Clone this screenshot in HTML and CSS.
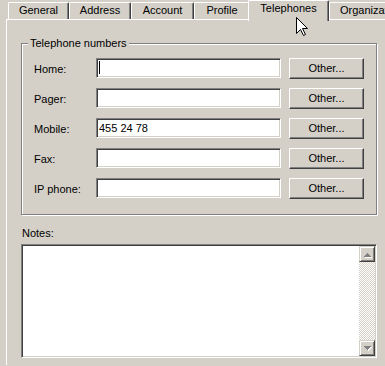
FILE: index.html
```html
<!DOCTYPE html>
<html>
<head>
<meta charset="utf-8">
<link rel="stylesheet" href="styles.css">
</head>
<body>
<div class="window">
  <div class="tabs">
    <div class="tab w-general">General</div>
    <div class="tab w-address">Address</div>
    <div class="tab w-account">Account</div>
    <div class="tab w-profile">Profile</div>
    <div class="tab active">Telephones</div>
    <div class="tab w-org">Organization</div>
  </div>
  <div class="page">
    <div class="group">
      <span class="legend">Telephone numbers</span>
      <div class="row"><span class="lbl">Home:</span><div class="field"><span class="caret"></span></div><div class="btn">Other...</div></div>
      <div class="row"><span class="lbl">Pager:</span><div class="field"></div><div class="btn">Other...</div></div>
      <div class="row"><span class="lbl">Mobile:</span><div class="field">455 24 78</div><div class="btn">Other...</div></div>
      <div class="row"><span class="lbl">Fax:</span><div class="field"></div><div class="btn">Other...</div></div>
      <div class="row"><span class="lbl">IP phone:</span><div class="field"></div><div class="btn">Other...</div></div>
    </div>
    <div class="notes-label">Notes:</div>
    <div class="notes">
      <div class="notes-body"></div>
      <div class="scrollbar">
        <div class="sbtn">
          <svg width="14" height="14" viewBox="0 0 14 14"><path d="M7 6h1v1H7zM6 7h3v1H6zM5 8h5v1H5zM4 9h7v1H4z" fill="#fff" transform="translate(1 1)"/><path d="M7 6h1v1H7zM6 7h3v1H6zM5 8h5v1H5zM4 9h7v1H4z" fill="#808080"/></svg>
        </div>
        <div class="track"></div>
        <div class="sbtn">
          <svg width="14" height="14" viewBox="0 0 14 14"><path d="M4 5h7v1H4zM5 6h5v1H5zM6 7h3v1H6zM7 8h1v1H7z" fill="#fff" transform="translate(1 1)"/><path d="M4 5h7v1H4zM5 6h5v1H5zM6 7h3v1H6zM7 8h1v1H7z" fill="#808080"/></svg>
        </div>
      </div>
    </div>
  </div>
  <svg class="cursor" width="13" height="20" viewBox="0 0 13 20"><path d="M0.5 0.5V16.5L4.5 12.5L7.5 18.5L9.5 17.5L6.5 11.5H11.5Z" fill="#fff" stroke="#000" stroke-width="1" stroke-linejoin="miter"/></svg>
</div>
</body>
</html>
```

FILE: styles.css
```css
html, body {
  margin: 0;
  padding: 0;
  background: #d4d0c8;
  overflow: hidden;
}
body {
  width: 385px;
  height: 366px;
  font-family: "Liberation Sans", Arial, sans-serif;
  font-size: 11px;
  color: #000;
}
.window {
  position: relative;
  width: 385px;
  height: 366px;
}
.tabs {
  display: flex;
  align-items: flex-end;
  height: 19px;
  padding-left: 8px;
  white-space: nowrap;
}
.tab {
  box-sizing: border-box;
  height: 17px;
  flex: none;
  border-top: 1px solid #fff;
  border-left: 1px solid #fff;
  border-right: 1px solid #404040;
  border-radius: 2px 2px 0 0;
  box-shadow: inset -1px 0 #808080;
  background: #d4d0c8;
  line-height: 13px;
  padding-top: 1px;
  text-align: center;
}
.w-general { width: 61px; }
.w-address { width: 62px; }
.w-account { width: 63px; }
.w-profile { width: 56px; }
.w-org { width: 80px; text-align: left; padding-left: 10px; }
.tab.active {
  position: relative;
  z-index: 2;
  width: 81px;
  height: 21px;
  margin-left: -2px;
  margin-bottom: -2px;
}
.page {
  margin-left: 6px;
  border-left: 1px solid #fff;
  border-top: 1px solid #fff;
  padding-left: 14px;
  height: 346px;
  box-sizing: border-box;
}
.group {
  position: relative;
  box-sizing: border-box;
  width: 356px;
  margin-top: 23px;
  border: 1px solid #808080;
  box-shadow: inset 1px 1px #fff, 1px 1px #fff;
  padding: 14px 12px 15px 12px;
  display: flex;
  flex-direction: column;
  gap: 9px;
}
.legend {
  position: absolute;
  top: -8px;
  left: 6px;
  padding: 0 2px;
  background: #d4d0c8;
  line-height: 14px;
}
.row {
  display: flex;
  align-items: flex-start;
  height: 21px;
}
.lbl {
  width: 62px;
  flex: none;
  line-height: 13px;
  padding-top: 5px;
}
.field {
  box-sizing: border-box;
  width: 185px;
  height: 20px;
  flex: none;
  background: #fff;
  border: 1px solid;
  border-color: #808080 #fff #fff #808080;
  box-shadow: inset 1px 1px #404040, inset -1px -1px #d4d0c8;
  padding: 3px 2px 0 2px;
  line-height: 13px;
}
.caret {
  display: block;
  width: 1px;
  height: 13px;
  margin-top: -1px;
  background: #000;
}
.btn {
  box-sizing: border-box;
  width: 75px;
  height: 21px;
  flex: none;
  margin-left: 8px;
  border: 1px solid;
  border-color: #fff #404040 #404040 #fff;
  box-shadow: inset -1px -1px #808080;
  text-align: center;
  line-height: 13px;
  padding-top: 3px;
}
.notes-label {
  margin-top: 12px;
  margin-left: 1px;
  line-height: 13px;
  margin-bottom: 4px;
}
.notes {
  box-sizing: border-box;
  width: 356px;
  height: 114px;
  display: flex;
  border: 1px solid;
  border-color: #808080 #fff #fff #808080;
  box-shadow: inset 1px 1px #404040, inset -1px -1px #d4d0c8;
  padding: 1px;
  background: #fff;
}
.notes-body {
  flex: 1;
}
.scrollbar {
  width: 16px;
  display: flex;
  flex-direction: column;
}
.sbtn {
  box-sizing: border-box;
  width: 16px;
  height: 16px;
  flex: none;
  background: #d4d0c8;
  border: 1px solid;
  border-color: #d4d0c8 #404040 #404040 #d4d0c8;
  box-shadow: inset 1px 1px #fff, inset -1px -1px #808080;
  display: flex;
}
.sbtn svg {
  display: block;
}
.track {
  flex: 1;
  background: repeating-conic-gradient(#fff 0 25%, #d4d0c8 0 50%) 0 0 / 2px 2px;
}
.cursor {
  position: absolute;
  left: 296px;
  top: 17px;
  z-index: 5;
}
```
